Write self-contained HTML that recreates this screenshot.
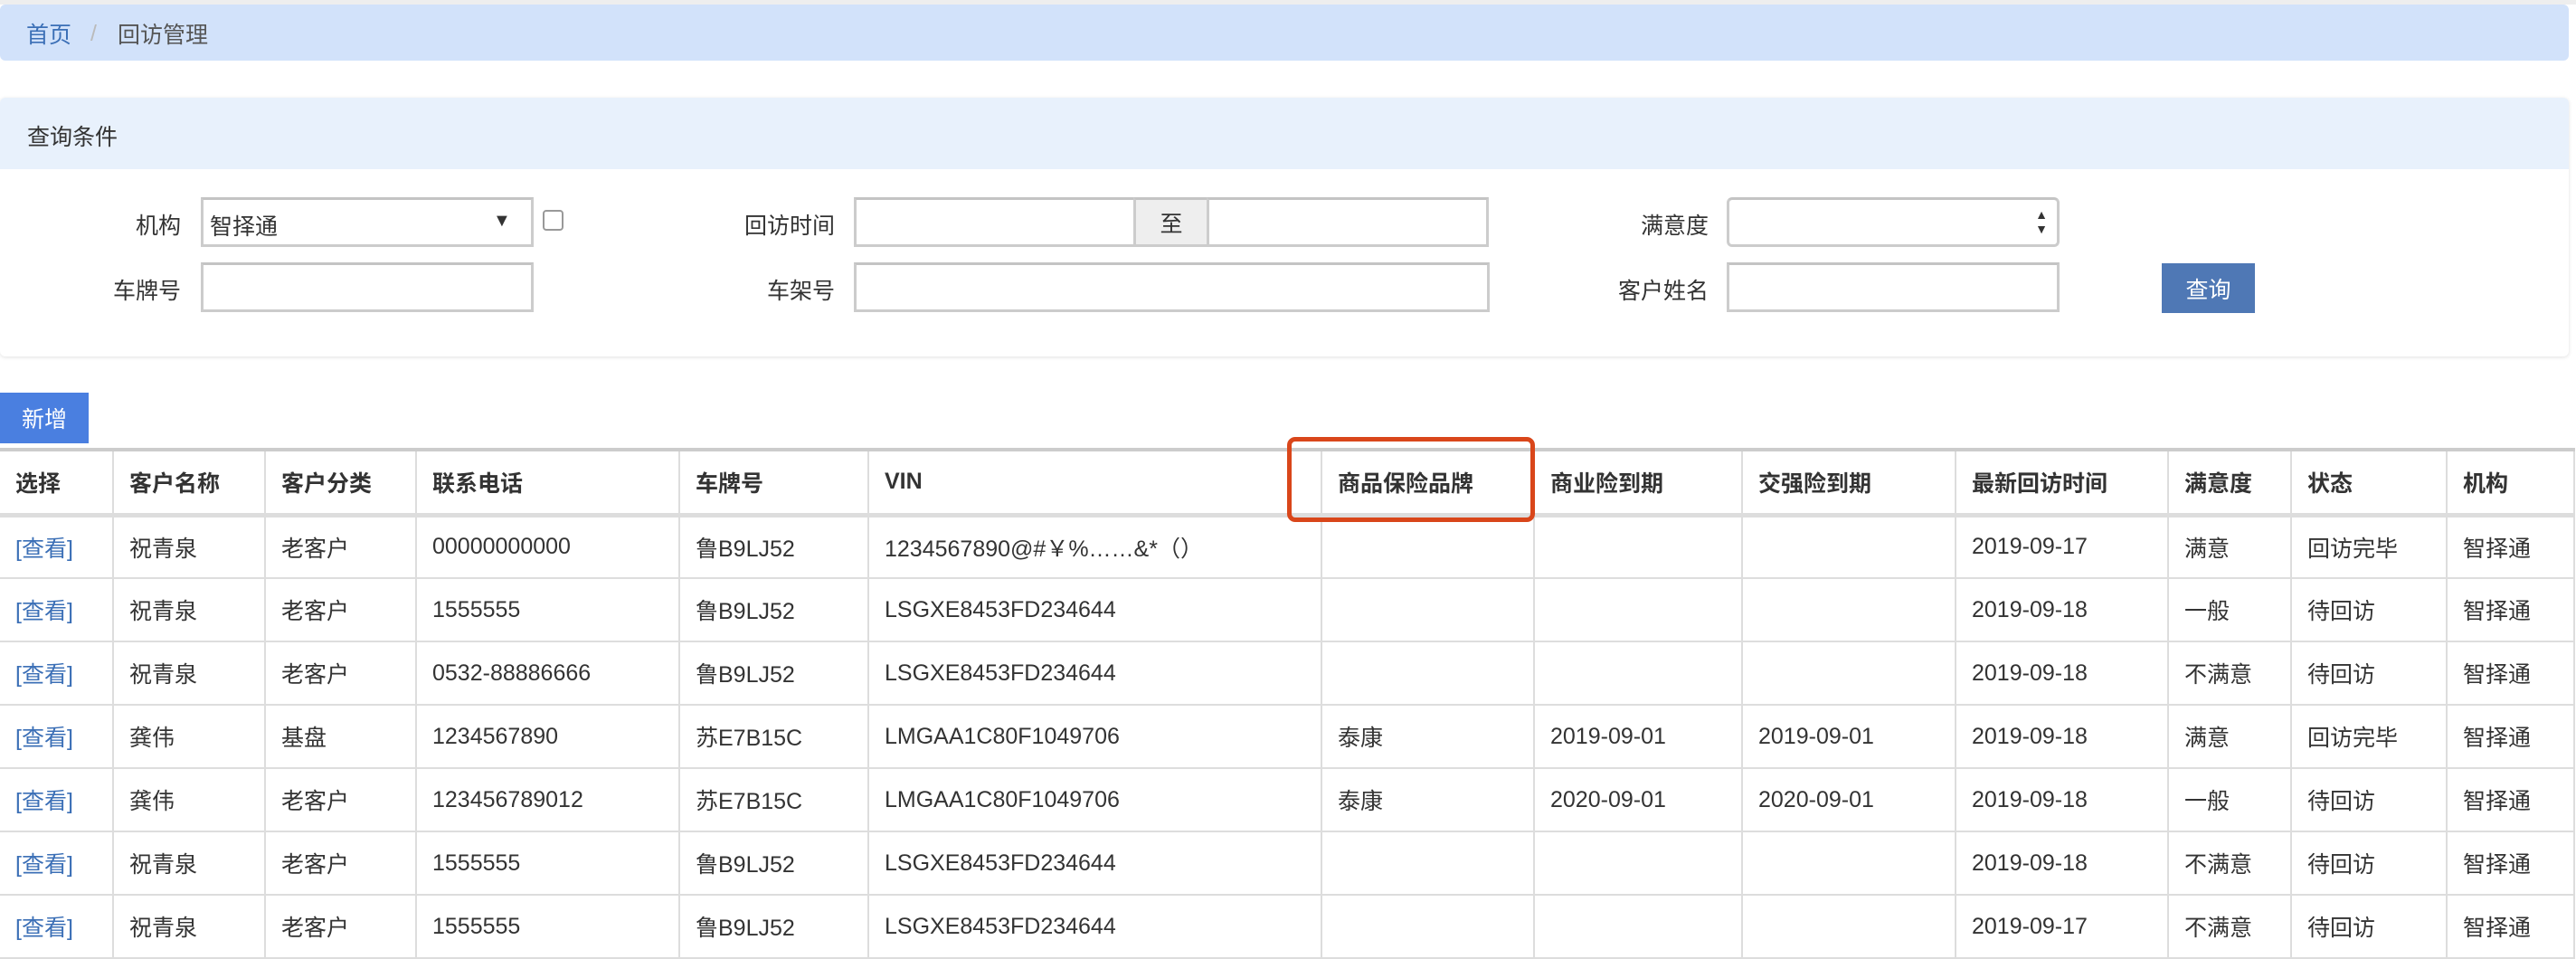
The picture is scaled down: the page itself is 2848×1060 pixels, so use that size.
<!DOCTYPE html>
<html><head><meta charset="utf-8"><style>
*{box-sizing:border-box;margin:0;padding:0}
body{width:2848px;height:1052px;overflow:hidden;background:#fff;font-family:"Liberation Sans","Noto Sans CJK SC",sans-serif;font-size:25px;color:#333;position:relative}
.abs{position:absolute}
.bc{left:0;top:5px;width:2840px;height:62px;background:#d2e2fa;border-radius:6px}
.bc span{position:absolute;top:14px;font-size:25px}
.panel{left:0;top:108px;width:2840px;height:286px;border-radius:6px;box-shadow:0 1px 4px rgba(0,0,0,.12);background:#fff}
.ph{left:0;top:108px;width:2840px;height:79px;background:#e8f1fc;border-radius:6px 6px 0 0}
.lbl{text-align:right;width:200px;font-size:25px}
.inp{border:3px solid #ccc;border-top-color:#c4c4c4;background:#fff;height:55px}
.btn{color:#fff;display:flex;align-items:center;justify-content:center;font-size:25px}
table{position:absolute;left:0;top:495px;width:2846px;border-collapse:collapse;table-layout:fixed;border-top:4px solid #ccc}
td,th{border:2px solid #ddd;text-align:left;padding:0 0 0 17px;height:70px;font-weight:normal;white-space:nowrap;overflow:hidden}
th{height:72px;font-weight:bold;border-bottom:5px solid #ddd}
tr>*:first-child{border-left:none}
a{color:#3b6fb6;text-decoration:none}
</style></head><body>
<div class="abs" style="left:0;top:0;width:2848px;height:5px;background:#eee"></div>
<div class="abs bc"><span style="left:29px;color:#3b6fb6">首页</span><span style="left:100px;top:18px;color:#bbb">/</span><span style="left:130px;color:#555">回访管理</span></div>
<div class="abs panel"></div>
<div class="abs ph"><span class="abs" style="left:30px;top:24px">查询条件</span></div>

<div class="abs lbl" style="left:0;top:230px">机构</div>
<div class="abs inp" style="left:222px;top:218px;width:368px"><span class="abs" style="left:7px;top:10px">智择通</span><span class="abs" style="left:320px;top:12px;font-size:20px">▼</span></div>
<div class="abs" style="left:600px;top:232px;width:23px;height:23px;border:2px solid #999;border-radius:4px"></div>
<div class="abs lbl" style="left:723px;top:230px">回访时间</div>
<div class="abs inp" style="left:944px;top:218px;width:312px"></div>
<div class="abs inp" style="left:1253px;top:218px;width:84px;background:#eee;display:flex;align-items:center;justify-content:center">至</div>
<div class="abs inp" style="left:1334px;top:218px;width:312px"></div>
<div class="abs lbl" style="left:1689px;top:230px">满意度</div>
<div class="abs inp" style="left:1909px;top:218px;width:368px;border-radius:6px"><span class="abs" style="right:10px;top:8px;font-size:14px;line-height:16px">▲<br>▼</span></div>

<div class="abs lbl" style="left:0;top:302px">车牌号</div>
<div class="abs inp" style="left:222px;top:290px;width:368px"></div>
<div class="abs lbl" style="left:723px;top:302px">车架号</div>
<div class="abs inp" style="left:944px;top:290px;width:703px"></div>
<div class="abs lbl" style="left:1689px;top:302px">客户姓名</div>
<div class="abs inp" style="left:1909px;top:290px;width:368px"></div>
<div class="abs btn" style="left:2390px;top:291px;width:103px;height:55px;background:#4f78b5">查询</div>

<div class="abs btn" style="left:0;top:434px;width:98px;height:56px;background:#4a7fe0">新增</div>

<table>
<colgroup><col style="width:125px"><col style="width:168px"><col style="width:167px"><col style="width:291px"><col style="width:209px"><col style="width:501px"><col style="width:235px"><col style="width:230px"><col style="width:236px"><col style="width:235px"><col style="width:136px"><col style="width:172px"><col style="width:141px"></colgroup>
<tr><th>选择</th><th>客户名称</th><th>客户分类</th><th>联系电话</th><th>车牌号</th><th>VIN</th><th>商品保险品牌</th><th>商业险到期</th><th>交强险到期</th><th>最新回访时间</th><th>满意度</th><th>状态</th><th>机构</th></tr>
<tr><td><a>[查看]</a></td><td>祝青泉</td><td>老客户</td><td>00000000000</td><td>鲁B9LJ52</td><td>1234567890@#￥%……&amp;*（）</td><td></td><td></td><td></td><td>2019-09-17</td><td>满意</td><td>回访完毕</td><td>智择通</td></tr>
<tr><td><a>[查看]</a></td><td>祝青泉</td><td>老客户</td><td>1555555</td><td>鲁B9LJ52</td><td>LSGXE8453FD234644</td><td></td><td></td><td></td><td>2019-09-18</td><td>一般</td><td>待回访</td><td>智择通</td></tr>
<tr><td><a>[查看]</a></td><td>祝青泉</td><td>老客户</td><td>0532-88886666</td><td>鲁B9LJ52</td><td>LSGXE8453FD234644</td><td></td><td></td><td></td><td>2019-09-18</td><td>不满意</td><td>待回访</td><td>智择通</td></tr>
<tr><td><a>[查看]</a></td><td>龚伟</td><td>基盘</td><td>1234567890</td><td>苏E7B15C</td><td>LMGAA1C80F1049706</td><td>泰康</td><td>2019-09-01</td><td>2019-09-01</td><td>2019-09-18</td><td>满意</td><td>回访完毕</td><td>智择通</td></tr>
<tr><td><a>[查看]</a></td><td>龚伟</td><td>老客户</td><td>123456789012</td><td>苏E7B15C</td><td>LMGAA1C80F1049706</td><td>泰康</td><td>2020-09-01</td><td>2020-09-01</td><td>2019-09-18</td><td>一般</td><td>待回访</td><td>智择通</td></tr>
<tr><td><a>[查看]</a></td><td>祝青泉</td><td>老客户</td><td>1555555</td><td>鲁B9LJ52</td><td>LSGXE8453FD234644</td><td></td><td></td><td></td><td>2019-09-18</td><td>不满意</td><td>待回访</td><td>智择通</td></tr>
<tr><td><a>[查看]</a></td><td>祝青泉</td><td>老客户</td><td>1555555</td><td>鲁B9LJ52</td><td>LSGXE8453FD234644</td><td></td><td></td><td></td><td>2019-09-17</td><td>不满意</td><td>待回访</td><td>智择通</td></tr>
</table>
<div class="abs" style="left:1423px;top:483px;width:274px;height:94px;border:5px solid #d9461a;border-radius:9px"></div>
</body></html>
